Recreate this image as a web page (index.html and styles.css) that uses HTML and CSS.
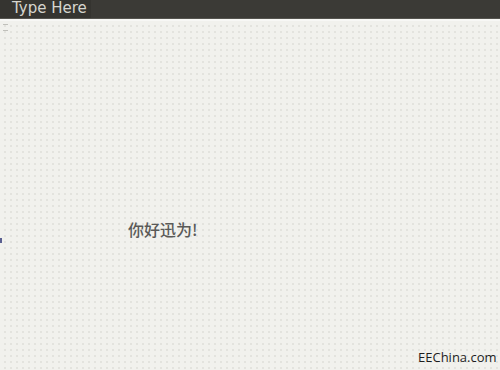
FILE: index.html
```html
<!DOCTYPE html>
<html>
<head>
<meta charset="utf-8">
<link rel="stylesheet" href="styles.css">
</head>
<body>
<div class="page">
  <div class="titlebar"><span class="title">Type Here</span></div>
  <div class="strip"></div>
  <div class="canvas">
    <span class="grip"></span>
    <span class="hello">你好迅为!</span>
    <span class="marker"></span>
    <span class="brand">EEChina.com</span>
  </div>
</div>
</body>
</html>
```
FILE: styles.css
```css
html, body {
  margin: 0;
  padding: 0;
}
body {
  width: 500px;
  height: 370px;
  overflow: hidden;
  background: #f0f0ec;
  font-family: "Open Sans", "DejaVu Sans", "Noto Sans CJK SC", sans-serif;
}
.page {
  display: flex;
  flex-direction: column;
  width: 500px;
  height: 370px;
}
.titlebar {
  height: 18px;
  background: #3b3a36;
  border-bottom: 1px solid #55544f;
  display: flex;
  align-items: center;
}
.title {
  height: 18px;
  padding: 0 4px 0 12px;
  background: #353430;
  color: #d6d5cf;
  font-size: 15px;
  line-height: 17px;
  font-family: "DejaVu Sans", "Open Sans", sans-serif;
}
.strip {
  height: 2px;
  background: #f7f7f5;
}
.canvas {
  flex: 1;
  position: relative;
  background-color: #f1f1ed;
  background-image: radial-gradient(circle, #e3e3de 0.8px, transparent 1px);
  background-size: 6px 6px;
  background-position: 2px 2px;
}
.grip {
  position: absolute;
  left: 3px;
  top: 3px;
  width: 5px;
  height: 5px;
  border-top: 1px solid #c0c0bb;
  border-bottom: 1px solid #c0c0bb;
}
.hello {
  position: absolute;
  left: 128px;
  top: 198px;
  font-family: "Noto Sans CJK SC", sans-serif;
  font-size: 16px;
  font-weight: 500;
  color: #5a5a58;
  line-height: 20px;
}
.marker {
  position: absolute;
  left: 0;
  top: 217px;
  width: 2px;
  height: 5px;
  background: #5a5f90;
}
.brand {
  position: absolute;
  left: 418px;
  top: 327px;
  font-family: "Open Sans", sans-serif;
  font-size: 13px;
  color: #1d1d1d;
  line-height: 18px;
}
```
